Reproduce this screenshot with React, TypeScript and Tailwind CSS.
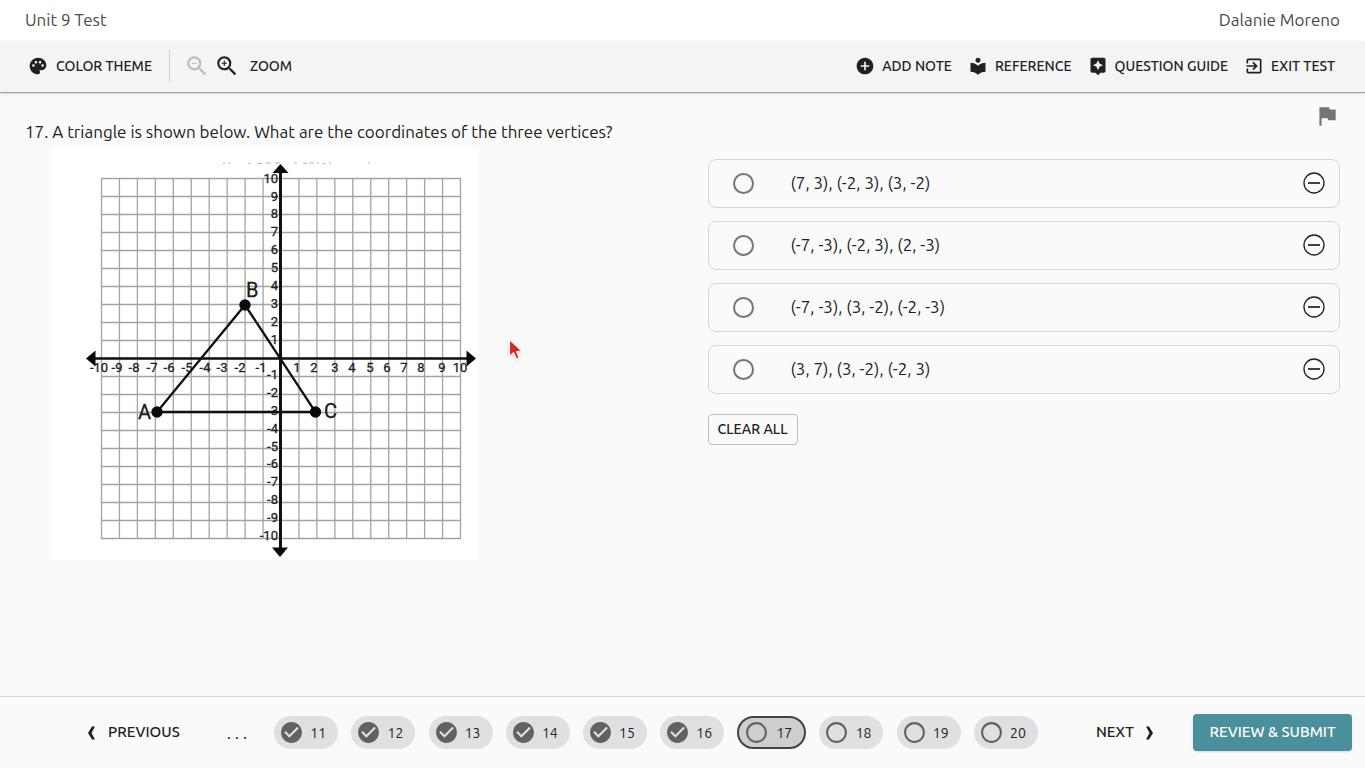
import { useState } from "react";
import {
  MdAddCircle,
  MdAssistant,
  MdCheckCircle,
  MdExitToApp,
  MdFlag,
  MdLocalLibrary,
  MdPalette,
  MdRadioButtonUnchecked,
  MdZoomIn,
  MdZoomOut,
} from "react-icons/md";

const options = [
  "(7, 3), (-2, 3), (3, -2)",
  "(-7, -3), (-2, 3), (2, -3)",
  "(-7, -3), (3, -2), (-2, -3)",
  "(3, 7), (3, -2), (-2, 3)",
];

const questions = [11, 12, 13, 14, 15, 16, 17, 18, 19, 20];
const CURRENT = 17;

const toolButton = "flex items-center gap-[7px] text-sm leading-5 font-medium";

const steps = Array.from({ length: 21 }, (_, i) => i);
const xLabels: [string, number][] = [
  ["-10", 47], ["-9", 65], ["-8", 82], ["-7", 100], ["-6", 117], ["-5", 135], ["-4", 153],
  ["-3", 170], ["-2", 188], ["-1", 209], ["1", 245], ["2", 262], ["3", 283], ["4", 300],
  ["5", 318], ["6", 335], ["7", 352], ["8", 369], ["9", 390], ["10", 408],
];
const yLabels = [10, 9, 8, 7, 6, 5, 4, 3, 2, 1, -1, -2, -3, -4, -5, -6, -7, -8, -9, -10];

function Graph() {
  return (
    <svg
      viewBox="0 0 426 412"
      className="ml-[27px] block h-auto w-full max-w-[426px] bg-white"
      role="img"
      aria-label="Triangle ABC on a coordinate plane"
    >
      <g stroke="#a3a3a3" strokeWidth="1.3">
        {steps.map((i) => (
          <line key={`v${i}`} x1={49.5 + i * 17.95} x2={49.5 + i * 17.95} y1="30" y2="390.5" />
        ))}
        {steps.map((i) => (
          <line key={`h${i}`} y1={30.5 + i * 18} y2={30.5 + i * 18} x1="49" x2="409" />
        ))}
      </g>
      <path
        d="M171 15.5h2m3-.5h2m18 .5h2m7 0h5m4-.5h5m4 0h5m14 0h3m6 .5h4m2-.5h5m3 0h2m4 .5h3m3-.5h2m37 0h2"
        stroke="#b5b5b5"
        strokeWidth="1"
      />
      <g fill="#222" fontFamily="Roboto, sans-serif" fontSize="13" stroke="#222" strokeWidth=".3">
        {xLabels.map(([text, x]) => (
          <text key={text} x={x} y="224" textAnchor="middle">
            {text}
          </text>
        ))}
        {yLabels.map((n) => (
          <text key={n} x="226" y={n > 0 ? 214 - n * 17.94 : 213 - n * 17.9} textAnchor="end">
            {n}
          </text>
        ))}
      </g>
      <g stroke="#111" fill="none">
        <path d="M40 210.5H418" strokeWidth="2.6" />
        <path d="M228.5 22V402" strokeWidth="3" />
        <path d="M105 264L193 157L263.5 264Z" strokeWidth="2.3" />
      </g>
      <g fill="#0a0a0a">
        <path d="M228.5 16l8 9h-16zM228 409l8-9.5h-16zM34 210.5l9.5-8v16zM424 210.5l-9.5-8v16z" />
        <circle cx="105" cy="264" r="5.7" />
        <circle cx="193" cy="157" r="5.7" />
        <circle cx="263.5" cy="264" r="5.7" />
      </g>
      <g fill="#1a1a1a" stroke="#1a1a1a" strokeWidth=".3" fontFamily="Roboto, sans-serif" fontSize="20">
        <text x="86" y="271">A</text>
        <text x="194" y="149">B</text>
        <text x="272" y="270">C</text>
      </g>
    </svg>
  );
}

function Pointer() {
  return (
    <svg
      viewBox="0 0 16 22"
      className="absolute top-[338px] left-[508px] h-[22px] w-4 drop-shadow-sm"
      aria-hidden="true"
    >
      <path
        d="M1.5 2V18L5.5 14.5L8.5 21L11 20L8.5 13.5L13.5 13Z"
        fill="#d42a26"
        stroke="#fff"
        strokeWidth="1"
      />
    </svg>
  );
}

export default function App() {
  const [choice, setChoice] = useState<number | null>(null);

  return (
    <div className="relative flex min-h-screen flex-col bg-[#fafafa] font-['Ubuntu','Noto_Sans',sans-serif] text-[#212121]">
      <header>
        <div className="flex h-[41px] items-center justify-between bg-white px-[25px] pb-0.5 text-[17px] text-[#4a4a4a]">
          <h1>Unit 9 Test</h1>
          <span>Dalanie Moreno</span>
        </div>
        <div className="flex h-[52px] items-center justify-between border-b border-[#9e9e9e] bg-[#f4f4f4] pr-[30px] pb-px pl-7 shadow-sm">
          <div className="flex items-center">
            <button className={toolButton}>
              <MdPalette className="size-5" />
              <span className="ml-px">COLOR THEME</span>
            </button>
            <span className="mr-3.5 ml-[17px] h-8 w-px bg-[#d0d0d0]" />
            <button aria-label="Zoom out" disabled className="text-[#bdbdbd]">
              <MdZoomOut className="size-[26px]" />
            </button>
            <button aria-label="Zoom in" className="ml-1">
              <MdZoomIn className="size-[26px]" />
            </button>
            <span className="ml-2.5 text-sm leading-5 font-medium">ZOOM</span>
          </div>
          <div className="flex items-center gap-4">
            <button className={toolButton}>
              <MdAddCircle className="size-5" />
              ADD NOTE
            </button>
            <button className={toolButton}>
              <MdLocalLibrary className="size-5" />
              REFERENCE
            </button>
            <button className={toolButton}>
              <MdAssistant className="size-5" />
              QUESTION GUIDE
            </button>
            <button className={toolButton}>
              <MdExitToApp className="size-5" />
              EXIT TEST
            </button>
          </div>
        </div>
      </header>

      <main className="grid flex-1 grid-cols-2 gap-[50px] px-[25px]">
        <section className="pt-[27px]">
          <h2 id="question" className="mb-1 text-[17px] leading-6">
            17. A triangle is shown below. What are the coordinates of the three vertices?
          </h2>
          <Graph />
        </section>
        <section className="flex flex-col pt-2.5">
          <button aria-label="Flag question" className="self-end text-[#757575]">
            <MdFlag className="size-[26px]" />
          </button>
          <div role="radiogroup" aria-labelledby="question" className="mt-[30px] flex flex-col gap-[13px]">
            {options.map((text, i) => (
              <div key={text} className="flex h-[49px] items-center rounded-lg border border-[#d6d6d6] pr-3.5 pb-px pl-6">
                <input
                  type="radio"
                  name="answer"
                  id={`answer-${i}`}
                  checked={choice === i}
                  onChange={() => setChoice(i)}
                  className="size-[21px] appearance-none rounded-full border-2 border-[#757575] checked:border-[6px]"
                />
                <label htmlFor={`answer-${i}`} className="ml-[37px] flex-1 text-[17px]">
                  {text}
                </label>
                <button aria-label={`Eliminate ${text}`}>
                  <svg viewBox="0 0 22 22" className="size-[22px]" fill="none" stroke="currentColor">
                    <circle cx="11" cy="11" r="10" strokeWidth="1.3" />
                    <path d="M5 11h12" strokeWidth="1.7" />
                  </svg>
                </button>
              </div>
            ))}
          </div>
          <button
            onClick={() => setChoice(null)}
            className="mt-5 h-[31px] self-start rounded border border-[#bdbdbd] px-[9px] pb-px text-sm font-medium"
          >
            CLEAR ALL
          </button>
        </section>
      </main>

      <footer className="flex h-[72px] items-center border-t border-[#d9d9d9] pr-[13px] pl-[86px]">
        <button className="flex items-center gap-3 text-[15px] font-medium">
          <svg viewBox="0 0 10 14" className="h-3.5 w-2.5" fill="currentColor" aria-hidden="true">
            <path d="M6 .5H9L5.5 7L9 13.5H6L2 7Z" />
          </svg>
          PREVIOUS
        </button>
        <span className="ml-[47px] text-[17px]">. . .</span>
        <nav aria-label="Questions" className="mr-6 ml-[27px] flex flex-1 justify-between">
          {questions.map((n) => (
            <button
              key={n}
              aria-current={n === CURRENT ? "step" : undefined}
              className={
                n === CURRENT
                  ? "flex h-[33px] w-[69px] items-center justify-between rounded-full border-2 border-[#424242] bg-[#cecece] pr-3 pl-[5px] text-sm"
                  : "flex h-[33px] w-16 items-center justify-between rounded-full bg-[#e0e0e0] pr-3 pl-[5px] text-sm"
              }
            >
              {n < CURRENT ? (
                <MdCheckCircle className="size-[25px] text-[#616161]" />
              ) : (
                <MdRadioButtonUnchecked className="size-[25px] text-[#616161]" />
              )}
              {n}
            </button>
          ))}
        </nav>
        <button className="ml-[34px] flex items-center gap-[11px] text-[15px] font-medium">
          NEXT
          <svg viewBox="0 0 10 14" className="h-3.5 w-2.5" fill="currentColor" aria-hidden="true">
            <path d="M4 .5H1L4.5 7L1 13.5H4L8 7Z" />
          </svg>
        </button>
        <button className="ml-[38px] h-[37px] w-[159px] rounded bg-[#4a8f9c] text-[15px] font-medium text-white shadow">
          REVIEW &amp; SUBMIT
        </button>
      </footer>
      <Pointer />
    </div>
  );
}
